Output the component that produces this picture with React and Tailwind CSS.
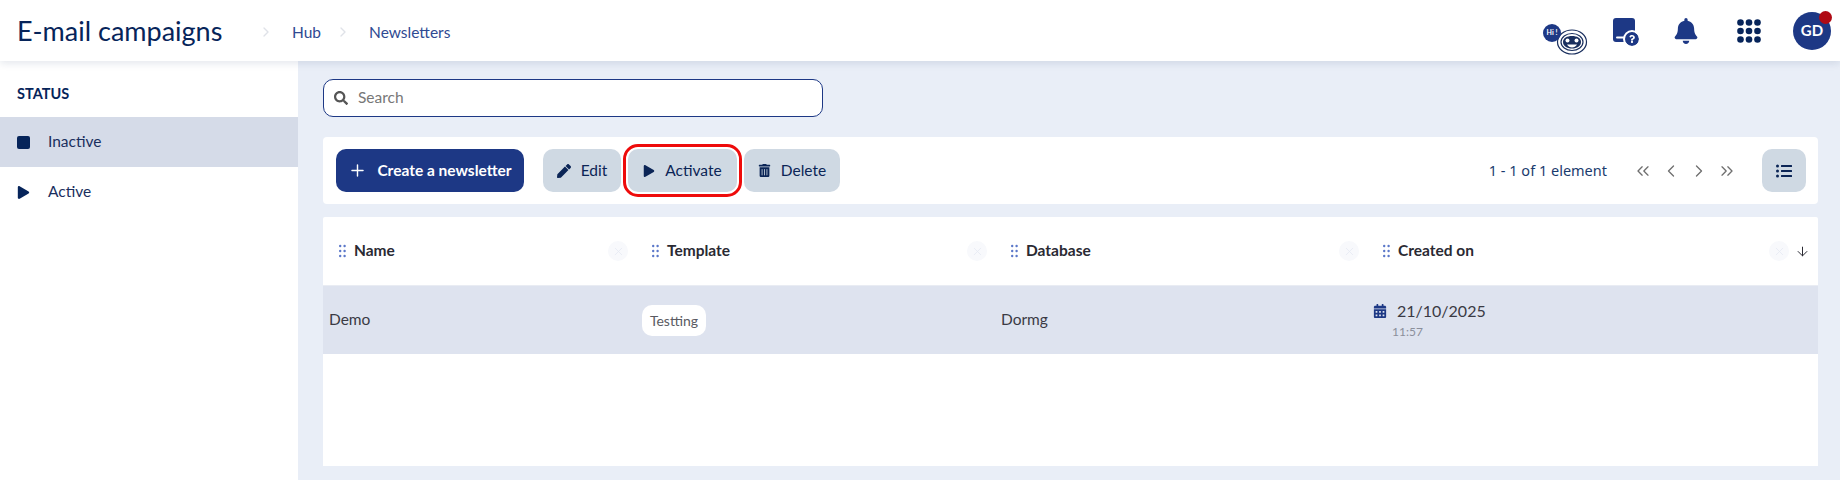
import React from "react";
import { Plus, ChevronRight, ChevronLeft, ChevronsLeft, ChevronsRight, X, ArrowDown } from "lucide-react";
import { FaPen, FaPlay, FaTrashAlt, FaListUl, FaSearch, FaCalendarAlt, FaBell, FaQuestion } from "react-icons/fa";

const FONT = "font-['Lato','Liberation_Sans',sans-serif]";

function Handle() {
  return (
    <svg width="7" height="14" viewBox="0 0 7 14" className="shrink-0" fill="#5b78c9">
      <circle cx="1.2" cy="2" r="1.2" /><circle cx="5.6" cy="2" r="1.2" />
      <circle cx="1.2" cy="7" r="1.2" /><circle cx="5.6" cy="7" r="1.2" />
      <circle cx="1.2" cy="12" r="1.2" /><circle cx="5.6" cy="12" r="1.2" />
    </svg>
  );
}

function HeadCell({ label, last }) {
  return (
    <div className="flex h-full items-center pl-4 pr-2">
      <Handle />
      <span className="ml-2 text-[15.5px] font-bold text-[#2a2a33]">{label}</span>
      <span className="ml-auto flex h-5 w-5 items-center justify-center rounded-full bg-[#f8f9fc]">
        <X size={13} strokeWidth={1.5} className="text-[#e6eaf3]" />
      </span>
      {last && <ArrowDown size={15} strokeWidth={1.6} className="ml-[6px] text-[#2a2a33]" />}
    </div>
  );
}

function ToolButton({ icon, label, className = "" }) {
  return (
    <button className={`flex h-[43px] items-center justify-center gap-[10px] rounded-[10px] bg-[#cfd9e3] text-[15.5px] text-[#0b2556] ${className}`}>
      {icon}
      <span>{label}</span>
    </button>
  );
}

function FaceIcon() {
  return (
    <div className="relative h-[32px] w-[46px]">
      <svg width="32" height="26" viewBox="0 0 32 26" className="absolute left-[13px] top-[14px]" fill="none" stroke="#1a2f5e">
        <ellipse cx="16" cy="13" rx="14.5" ry="12" strokeWidth="1.2" />
        <ellipse cx="16" cy="13" rx="11" ry="8.5" strokeWidth="1.2" />
        <path d="M7 13c0-4 4-6 9-6s9 2 9 6c0 4-4 6.5-9 6.5S7 17 7 13z" fill="#1a2f5e" stroke="none" />
        <circle cx="11.5" cy="11.5" r="2" fill="#fff" stroke="none" />
        <circle cx="20.5" cy="11.5" r="2" fill="#fff" stroke="none" />
        <path d="M11 15.5h10c-1 2-3 3-5 3s-4-1-5-3z" fill="#fff" stroke="none" />
      </svg>
      <span className="absolute left-0 top-[9px] flex h-[18px] w-[18px] items-center justify-center rounded-full bg-[#1d3885] text-[7px] font-bold text-white">Hi !</span>
    </div>
  );
}

function DocHelp() {
  return (
    <div className="relative h-[26px] w-[26px]">
      <svg width="22" height="24" viewBox="0 0 22 24" fill="#1d3885">
        <path d="M3 0h16a3 3 0 0 1 3 3v21H3a3 3 0 0 1-3-3V3a3 3 0 0 1 3-3z" />
        <rect x="3" y="18.5" width="8" height="2" rx="1" fill="#fff" />
      </svg>
      <span className="absolute left-[12px] top-[14px] flex h-[14px] w-[14px] items-center justify-center rounded-full bg-[#1d3885] outline-2 outline-white">
        <FaQuestion size={8} className="text-white" />
      </span>
    </div>
  );
}

function Dots() {
  const c = [3.5, 12, 20.5];
  return (
    <svg width="24" height="24" viewBox="0 0 24 24" fill="#06245a">
      {c.map((y) => c.map((x) => <circle key={`${x}-${y}`} cx={x} cy={y} r="3.3" />))}
    </svg>
  );
}

export default function App() {
  return (
    <div className={`flex h-[480px] w-[1840px] flex-col overflow-hidden bg-[#e9eef7] ${FONT}`}>
      <header className="relative z-10 flex h-[61px] shrink-0 items-center bg-white pl-[17px] shadow-[0_2px_8px_rgba(20,40,90,0.12)]">
        <h1 className="w-[241px] text-[27px] leading-none text-[#06245a]">E-mail campaigns</h1>
        <ChevronRight size={16} className="mt-[3px] text-[#dfe2e8]" />
        <span className="ml-[18px] mt-[5px] text-[15.5px] text-[#2f4a92]">Hub</span>
        <ChevronRight size={16} className="ml-[14px] mt-[3px] text-[#dfe2e8]" />
        <span className="ml-[18px] mt-[5px] text-[15.5px] text-[#2f4a92]">Newsletters</span>
        <div className="ml-auto flex items-center">
          <FaceIcon />
          <div className="ml-[24px]"><DocHelp /></div>
          <FaBell size={26} className="ml-[34px] text-[#1d3885]" />
          <div className="ml-[38px]"><Dots /></div>
          <div className="relative ml-[32px] mr-[9px] flex h-[38px] w-[38px] items-center justify-center rounded-full bg-[#1d3885] text-[15px] font-bold text-white">
            GD
            <span className="absolute right-[-1px] top-[-1px] h-[13px] w-[13px] rounded-full bg-[#b00a14]" />
          </div>
        </div>
      </header>

      <div className="flex min-h-0 flex-1">
        <aside className="w-[298px] shrink-0 bg-white">
          <div className="flex h-[56px] items-end pb-[12px] pl-[17px] text-[14.5px] font-bold text-[#06245a]">STATUS</div>
          <div className="flex h-[50px] items-center bg-[#d5dbe8] pl-[17px]">
            <span className="h-[13px] w-[13px] rounded-[2px] bg-[#06245a]" />
            <span className="ml-[18px] text-[15.5px] text-[#1a2f5e]">Inactive</span>
          </div>
          <div className="flex h-[50px] items-center pl-[17px]">
            <FaPlay size={13} className="text-[#06245a]" />
            <span className="ml-[18px] text-[15.5px] text-[#1a2f5e]">Active</span>
          </div>
        </aside>

        <main className="flex min-w-0 flex-1 flex-col pl-[25px] pr-[22px] pt-[18px]">
          <div className="flex h-[38px] w-[500px] items-center rounded-[10px] border border-[#1d3885] bg-white pl-[10px]">
            <FaSearch size={14} className="text-[#555]" />
            <span className="ml-[10px] text-[15.5px] text-[#777]">Search</span>
          </div>

          <div className="mt-[20px] flex h-[67px] items-center rounded-[4px] bg-white pl-[13px] pr-[12px]">
            <button className="flex h-[43px] w-[188px] items-center justify-center gap-[10px] rounded-[10px] bg-[#1d3885] text-[15.5px] font-bold text-white">
              <Plus size={19} strokeWidth={1.8} />
              <span>Create a newsletter</span>
            </button>
            <ToolButton className="ml-[19px] w-[78px]" icon={<FaPen size={14} />} label="Edit" />
            <ToolButton className="ml-[7px] w-[109px] outline-3 outline-offset-2 outline-[#ee0b0b]" icon={<FaPlay size={12} />} label="Activate" />
            <ToolButton className="ml-[7px] w-[96px]" icon={<FaTrashAlt size={13} />} label="Delete" />
            <span className="ml-auto font-['Noto_Sans','Liberation_Sans',sans-serif] text-[14.5px] text-[#1a3b6e]">1 - 1 of 1 element</span>
            <div className="ml-[26px] flex items-center gap-[8px] text-[#6f6f6f]">
              <ChevronsLeft size={20} strokeWidth={1.6} />
              <ChevronLeft size={20} strokeWidth={1.6} />
              <ChevronRight size={20} strokeWidth={1.6} />
              <ChevronsRight size={20} strokeWidth={1.6} />
            </div>
            <button className="ml-[25px] flex h-[43px] w-[44px] items-center justify-center rounded-[10px] bg-[#cfd9e3] text-[#0b2556]">
              <FaListUl size={16} />
            </button>
          </div>

          <div className="mt-[13px] h-[249px] rounded-t-[2px] bg-white">
            <div className="grid h-[69px] grid-cols-[313px_359px_372px_1fr] border-b border-[#e9ecf3]">
              <HeadCell label="Name" />
              <HeadCell label="Template" />
              <HeadCell label="Database" />
              <HeadCell label="Created on" last />
            </div>
            <div className="grid h-[68px] grid-cols-[313px_359px_372px_1fr] items-center bg-[#dee3ef] text-[15.5px] text-[#3a3a44]">
              <div className="pl-[6px]">Demo</div>
              <div className="pl-[6px]">
                <span className="inline-flex h-[31px] w-[64px] items-center justify-center rounded-[10px] bg-white text-[14px] text-[#5a5a62]">Testting</span>
              </div>
              <div className="pl-[6px]">Dormg</div>
              <div className="pl-[6px]">
                <div className="flex items-center">
                  <FaCalendarAlt size={14} className="text-[#1d3885]" />
                  <span className="ml-[10px] text-[16px] leading-[20px]">21/10/2025</span>
                </div>
                <div className="ml-[19px] mt-[4px] text-[12px] leading-[14px] text-[#8b8f9b]">11:57</div>
              </div>
            </div>
          </div>
        </main>
      </div>
    </div>
  );
}
